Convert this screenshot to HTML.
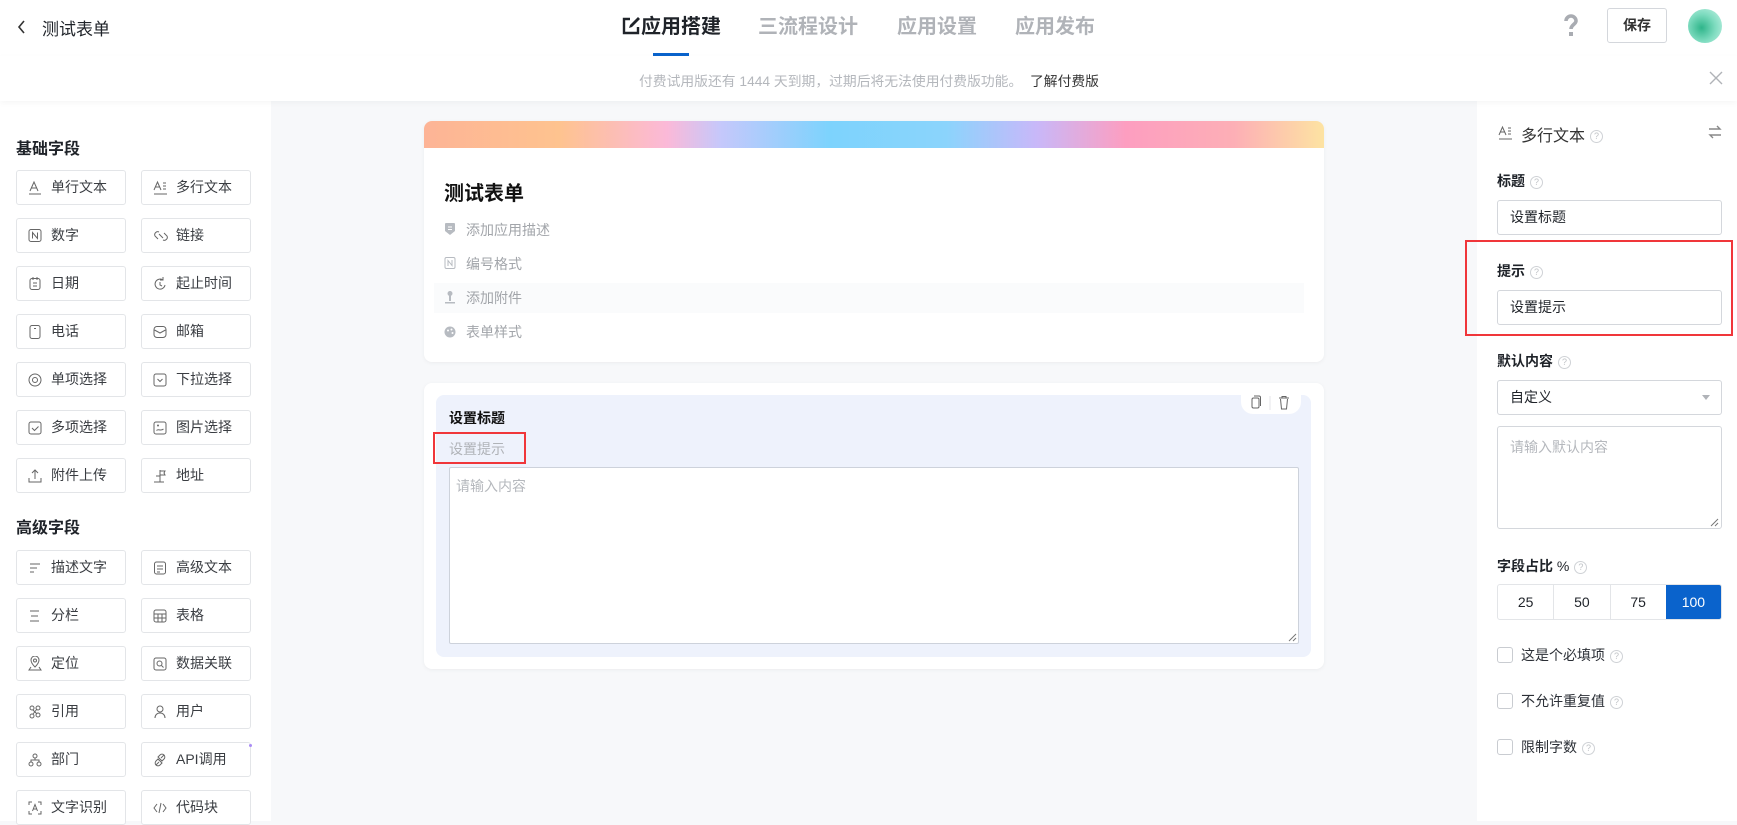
<!DOCTYPE html>
<html><head><meta charset="utf-8"><style>
*{box-sizing:border-box;margin:0;padding:0}
body{width:1737px;height:821px;overflow:hidden;background:#f7f8fa;font-family:"Liberation Sans","Noto Sans CJK SC",sans-serif;color:#1f2329;position:relative}
.a{position:absolute}
.hdr{left:0;top:0;width:1737px;height:56px;background:#fff;box-shadow:0 2px 6px rgba(0,0,0,.04);z-index:2}
.ban{left:0;top:56px;width:1737px;height:45px;background:#fff;box-shadow:0 2px 6px rgba(0,0,0,.04);z-index:2}
.tab{top:13px;font-size:20px;font-weight:bold;color:#b0b3b8;line-height:28px}
.left{left:0;top:101px;width:271px;height:720px;background:#fff}
.btn{position:absolute;width:110px;height:35px;border:1px solid #e3e5e8;border-radius:3px;font-size:14px;color:#3a3d42;line-height:33px;padding-left:34px;background:#fff}
.btn svg{position:absolute;left:11px;top:9px}
.sec{font-size:16px;font-weight:bold;color:#1f2329}
.right{left:1477px;top:101px;width:260px;height:720px;background:#fff}
.lbl{font-size:14px;font-weight:bold;color:#1f2329}
.q{display:inline-block;width:13px;height:13px;border:1px solid #cfd2d6;border-radius:50%;font-size:9px;line-height:11px;text-align:center;color:#bfc2c6;font-weight:normal;vertical-align:middle;margin-left:5px}
.inp{border:1px solid #d4d7dc;border-radius:3px;background:#fff;font-size:14px;padding-left:12px}
.ck{width:16px;height:16px;border:1px solid #c9ccd1;border-radius:3px}
.ckl{font-size:14px;color:#2b2f36}
.fi{font-size:14px;color:#a2a5aa}
</style></head><body>
<div class="a hdr">
 <svg class="a" style="left:17px;top:19px" width="10" height="16" viewBox="0 0 10 16"><path d="M7 2 L2 8 L7 14" stroke="#333" stroke-width="1.6" fill="none"/></svg>
 <div class="a" style="left:42px;top:15px;font-size:17px;color:#1f2329">测试表单</div>
 <svg class="a" style="left:621px;top:16px" width="20" height="20" viewBox="0 0 20 20"><path d="M9 3H3v14h14v-6" stroke="#1f2329" stroke-width="2.4" fill="none"/><path d="M8 12l1-3 8-8 2 2-8 8z" fill="#1f2329"/></svg>
 <div class="a tab" style="left:641px;color:#1f2329">应用搭建</div>
 <div class="a" style="left:653px;top:53px;width:36px;height:3px;background:#0a63cc"></div>
 <div class="a tab" style="left:758px">三流程设计</div>
 <div class="a tab" style="left:897px">应用设置</div>
 <div class="a tab" style="left:1015px">应用发布</div>
 <svg class="a" style="left:1563px;top:14px" width="16" height="24" viewBox="0 0 16 24"><path d="M3 7a5 5 0 0 1 10 0c0 3-5 4-5 8" stroke="#a9acb2" stroke-width="3.6" fill="none"/><rect x="6" y="18" width="4" height="4" fill="#a9acb2"/></svg>
 <div class="a" style="left:1607px;top:8px;width:60px;height:35px;border:1px solid #d4d7dc;border-radius:3px;font-size:14px;line-height:33px;text-align:center;font-weight:bold;color:#333">保存</div>
 <div class="a" style="left:1688px;top:9px;width:34px;height:34px;border-radius:50%;background:radial-gradient(circle at 40% 55%,#2fb58a,#7fdcc0 50%,#c8f3e7)"></div>
</div>
<div class="a ban">
 <div class="a" style="left:639px;top:14px;font-size:13.8px;color:#b4b7bc">付费试用版还有 1444 天到期，过期后将无法使用付费版功能。</div>
 <div class="a" style="left:1030px;top:14px;font-size:13.8px;color:#333">了解付费版</div>
 <svg class="a" style="left:1709px;top:15px" width="14" height="14" viewBox="0 0 14 14"><path d="M1 1L13 13M13 1L1 13" stroke="#b0b3b8" stroke-width="1.4"/></svg>
</div>
<div class="a left"></div>
<div class="a sec" style="left:16px;top:135px">基础字段</div>
<div class="a sec" style="left:16px;top:514px">高级字段</div>
<div class="btn" style="left:16px;top:170px"><svg width="14" height="16"><path d="M2 11L6 2 10 11M3.5 8h5M1 14h12" stroke="#666" fill="none"/></svg>单行文本</div>
<div class="btn" style="left:141px;top:170px"><svg width="16" height="16"><path d="M1 10L4.5 2 8 10M2 7h5M1 14h13M10 3h3M10 6h3M10 9h3" stroke="#666" fill="none"/></svg>多行文本</div>
<div class="btn" style="left:16px;top:218px"><svg width="14" height="16"><rect x="1" y="1.5" width="12" height="12" rx="2" stroke="#666" fill="none"/><path d="M4.5 10.5v-6l5 6v-6" stroke="#666" fill="none"/></svg>数字</div>
<div class="btn" style="left:141px;top:218px"><svg width="16" height="16"><path d="M6 4a3 3 0 0 0-4 4l3 3M10 12a3 3 0 0 0 4-4l-3-3M6 6l4 4" stroke="#666" fill="none"/></svg>链接</div>
<div class="btn" style="left:16px;top:266px"><svg width="14" height="16"><rect x="2" y="2.5" width="10" height="11" rx="2" stroke="#666" fill="none"/><path d="M5 1v3M9 1v3M5 7h4M5 10h4" stroke="#666"/></svg>日期</div>
<div class="btn" style="left:141px;top:266px"><svg width="14" height="16"><path d="M10 4A5 5 0 1 0 12 9M10 1v3h-3M7 6v3l2 1" stroke="#666" fill="none"/></svg>起止时间</div>
<div class="btn" style="left:16px;top:314px"><svg width="14" height="16"><rect x="2" y="1.5" width="10" height="13" rx="2" stroke="#666" fill="none"/><path d="M6 4.5h2" stroke="#666"/></svg>电话</div>
<div class="btn" style="left:141px;top:314px"><svg width="14" height="16"><rect x="1" y="2.5" width="12" height="11" rx="3" stroke="#666" fill="none"/><path d="M1.5 6l5.5 3 5.5-3" stroke="#666" fill="none"/></svg>邮箱</div>
<div class="btn" style="left:16px;top:362px"><svg width="14" height="16"><circle cx="7" cy="8" r="6" stroke="#666" fill="none"/><circle cx="7" cy="8" r="2.5" stroke="#666" fill="none"/></svg>单项选择</div>
<div class="btn" style="left:141px;top:362px"><svg width="14" height="16"><rect x="1" y="2" width="12" height="12" rx="2" stroke="#666" fill="none"/><path d="M4.5 7l2.5 2.5 2.5-2.5" stroke="#666" fill="none"/></svg>下拉选择</div>
<div class="btn" style="left:16px;top:410px"><svg width="14" height="16"><rect x="1" y="2" width="12" height="12" rx="2" stroke="#666" fill="none"/><path d="M4 8l2.5 2.5 4-4" stroke="#666" fill="none"/></svg>多项选择</div>
<div class="btn" style="left:141px;top:410px"><svg width="14" height="16"><rect x="1" y="2" width="12" height="12" rx="2" stroke="#666" fill="none"/><path d="M3.5 10.5c2-2 4 1 7-1.5" stroke="#666" fill="none"/><circle cx="5" cy="5.5" r="1" fill="#666"/></svg>图片选择</div>
<div class="btn" style="left:16px;top:458px"><svg width="14" height="16"><path d="M7 11V2M4 5l3-3 3 3M1 10v4h12v-4" stroke="#666" fill="none"/></svg>附件上传</div>
<div class="btn" style="left:141px;top:458px"><svg width="14" height="16"><path d="M7 2v12M7 3h5l-1 2 1 2H7M3 8h4M1 14h10" stroke="#666" fill="none"/></svg>地址</div>
<div class="btn" style="left:16px;top:550px"><svg width="14" height="16"><path d="M2 4h10M2 8h7M2 12h4" stroke="#666"/></svg>描述文字</div>
<div class="btn" style="left:141px;top:550px"><svg width="14" height="16"><rect x="1.5" y="2" width="11" height="12" rx="2" stroke="#666" fill="none"/><path d="M4 6h6M4 9h6M4 12h3" stroke="#666"/></svg>高级文本</div>
<div class="btn" style="left:16px;top:598px"><svg width="14" height="16"><path d="M2 3h9M3 8h7M2 13h9" stroke="#666"/></svg>分栏</div>
<div class="btn" style="left:141px;top:598px"><svg width="14" height="16"><rect x="1" y="2" width="12" height="12" rx="2" stroke="#666" fill="none"/><path d="M1 6h12M1 10h12M5 6v8M9 6v8" stroke="#666"/></svg>表格</div>
<div class="btn" style="left:16px;top:646px"><svg width="14" height="16"><path d="M7 11c-3-3-4-5-4-7a4 4 0 0 1 8 0c0 2-1 4-4 7z" stroke="#666" fill="none"/><circle cx="7" cy="4.5" r="1.5" stroke="#666" fill="none"/><path d="M3 11l-2 3h12l-2-3" stroke="#666" fill="none"/></svg>定位</div>
<div class="btn" style="left:141px;top:646px"><svg width="14" height="16"><rect x="1" y="2" width="12" height="12" rx="2" stroke="#666" fill="none"/><circle cx="6.5" cy="7.5" r="2.5" stroke="#666" fill="none"/><path d="M8.5 9.5l2 2" stroke="#666"/></svg>数据关联</div>
<div class="btn" style="left:16px;top:694px"><svg width="14" height="16"><circle cx="4" cy="4" r="2" stroke="#666" fill="none"/><circle cx="10" cy="4" r="2" stroke="#666" fill="none"/><circle cx="4" cy="12" r="2" stroke="#666" fill="none"/><circle cx="10" cy="11" r="2" stroke="#666" fill="none"/><path d="M5 6l4 4M9 5l-4 5" stroke="#666"/></svg>引用</div>
<div class="btn" style="left:141px;top:694px"><svg width="14" height="16"><circle cx="7" cy="5" r="3" stroke="#666" fill="none"/><path d="M2 14c0-3 2-5 5-5s5 2 5 5" stroke="#666" fill="none"/></svg>用户</div>
<div class="btn" style="left:16px;top:742px"><svg width="14" height="16"><circle cx="7" cy="4" r="2" stroke="#666" fill="none"/><circle cx="3" cy="12" r="2" stroke="#666" fill="none"/><circle cx="11" cy="12" r="2" stroke="#666" fill="none"/><path d="M7 6v2M3 10V8h8v2" stroke="#666" fill="none"/></svg>部门</div>
<div class="btn" style="left:141px;top:742px"><svg width="14" height="16"><path d="M3 13l3-3M11 3l-3 3M5 7l4 4-2 2a2.8 2.8 0 0 1-4-4zM9 9L5 5l2-2a2.8 2.8 0 0 1 4 4z" stroke="#666" fill="none"/></svg>API调用</div>
<div class="a" style="left:249px;top:744px;width:3px;height:3px;border-radius:50%;background:#a98cf5"></div>
<div class="btn" style="left:16px;top:790px"><svg width="14" height="16"><path d="M1 5V2h3M10 2h3v3M13 11v3h-3M4 14H1v-3M4.5 11L7 4.5 9.5 11M5.5 9h3" stroke="#666" fill="none"/></svg>文字识别</div>
<div class="btn" style="left:141px;top:790px"><svg width="14" height="16"><path d="M4 4L1 8l3 4M10 4l3 4-3 4M8 3L6 13" stroke="#666" fill="none"/></svg>代码块</div>

<div class="a" style="left:424px;top:121px;width:900px;height:241px;background:#fff;border-radius:8px;overflow:hidden;box-shadow:0 1px 4px rgba(0,0,0,.05)">
 <div style="height:27px;background:linear-gradient(90deg,#fdb496 0%,#fec38f 15%,#fbb9d8 27%,#c5c8fb 33%,#7dd3fd 45%,#8bd4fc 58%,#c8b8f9 68%,#fd9ec0 78%,#fdafb6 90%,#fde3a2 100%)"></div>
 <div class="a" style="left:20px;top:56px;font-size:20px;font-weight:bold;color:#111">测试表单</div>
 <div class="a" style="left:10px;top:162px;width:870px;height:30px;background:#fafbfc"></div>
 <svg class="a" style="left:20px;top:101px" width="12" height="14"><path d="M2 1h8a1 1 0 0 1 1 1v7l-5 4-5-4V2a1 1 0 0 1 1-1z" fill="#b7bbc1"/><path d="M4 5h4M4 7.5h4" stroke="#fff"/></svg>
 <div class="a fi" style="left:42px;top:99px">添加应用描述</div>
 <svg class="a" style="left:20px;top:135px" width="12" height="14"><rect x="1" y="1.5" width="10" height="11" rx="1.5" stroke="#b7bbc1" fill="none"/><path d="M4 10V4.5l4 5V4" stroke="#b7bbc1" fill="none"/></svg>
 <div class="a fi" style="left:42px;top:133px">编号格式</div>
 <svg class="a" style="left:20px;top:169px" width="12" height="14"><circle cx="6" cy="3.5" r="2.5" fill="#b7bbc1"/><path d="M5 5h2v6H5zM1 12h10v1.5H1z" fill="#b7bbc1"/></svg>
 <div class="a fi" style="left:42px;top:167px">添加附件</div>
 <svg class="a" style="left:20px;top:204px" width="12" height="14"><circle cx="6" cy="7" r="5.5" fill="#b7bbc1"/><circle cx="4" cy="5.5" r="1" fill="#fff"/><circle cx="7.5" cy="4.5" r="1" fill="#fff"/><circle cx="8.5" cy="8" r="1" fill="#fff"/></svg>
 <div class="a fi" style="left:42px;top:201px">表单样式</div>
</div>

<div class="a" style="left:424px;top:383px;width:900px;height:286px;background:#fff;border-radius:8px;box-shadow:0 1px 4px rgba(0,0,0,.05)"></div>
<div class="a" style="left:436px;top:395px;width:875px;height:262px;background:#eef2fc;border-radius:8px"></div>
<div class="a" style="left:1241px;top:390px;width:60px;height:24px;background:#fff;border-radius:0 0 12px 12px"></div>
<svg class="a" style="left:1249px;top:395px" width="44" height="16"><rect x="3" y="3" width="7" height="10" rx="1.5" stroke="#666" fill="none"/><path d="M5 1h5a1.5 1.5 0 0 1 1.5 1.5V11" stroke="#666" fill="none"/><path d="M21 1v14" stroke="#e5e6e8"/><path d="M30 3h10M33 3V1.5h4V3M31.5 4l1 10h5l1-10" stroke="#666" fill="none"/></svg>
<div class="a" style="left:449px;top:408px;font-size:14px;font-weight:bold;color:#111">设置标题</div>
<div class="a" style="left:449px;top:439px;font-size:14px;color:#b0b3b8">设置提示</div>
<div class="a" style="left:433px;top:432px;width:93px;height:32px;border:2px solid #f0363a"></div>
<div class="a" style="left:449px;top:467px;width:850px;height:177px;background:#fff;border:1px solid #cdd2db;border-radius:2px"></div>
<div class="a" style="left:456px;top:476px;font-size:14px;color:#b5b8bd">请输入内容</div>
<svg class="a" style="left:1288px;top:633px" width="9" height="9"><path d="M1 8L8 1M5 8L8 5" stroke="#777"/></svg>

<div class="a right"></div>
<svg class="a" style="left:1498px;top:125px" width="16" height="16"><path d="M1 10L4.5 2 8 10M2 7h5M1 14h13M10 3h3M10 6h3M10 9h3" stroke="#666" fill="none"/></svg>
<div class="a" style="left:1521px;top:122px;font-size:16px;color:#333">多行文本<span class="q">?</span></div>
<svg class="a" style="left:1708px;top:125px" width="14" height="14"><path d="M1 4h11l-3-3M13 10H2l3 3" stroke="#888" fill="none" stroke-width="1.4"/></svg>
<div class="a lbl" style="left:1497px;top:171px">标题<span class="q">?</span></div>
<div class="a inp" style="left:1497px;top:200px;width:225px;height:35px;line-height:33px;color:#1f2329">设置标题</div>
<div class="a" style="left:1465px;top:240px;width:268px;height:96px;border:2px solid #f0363a"></div>
<div class="a lbl" style="left:1497px;top:261px">提示<span class="q">?</span></div>
<div class="a inp" style="left:1497px;top:290px;width:225px;height:35px;line-height:33px;color:#1f2329">设置提示</div>
<div class="a lbl" style="left:1497px;top:351px">默认内容<span class="q">?</span></div>
<div class="a inp" style="left:1497px;top:380px;width:225px;height:35px;line-height:33px;color:#1f2329">自定义</div>
<svg class="a" style="left:1702px;top:395px" width="8" height="6"><path d="M0 0h8L4 5z" fill="#b0b3b8"/></svg>
<div class="a inp" style="left:1497px;top:426px;width:225px;height:103px;padding-top:10px;color:#b5b8bd">请输入默认内容</div>
<svg class="a" style="left:1710px;top:518px" width="9" height="9"><path d="M1 8L8 1M5 8L8 5" stroke="#777"/></svg>
<div class="a lbl" style="left:1497px;top:556px">字段占比 <span style="font-weight:normal">%</span><span class="q">?</span></div>
<div class="a" style="left:1497px;top:584px;width:225px;height:36px;border:1px solid #e3e5e8;border-radius:3px;display:flex;font-size:14px;line-height:34px;text-align:center;overflow:hidden">
 <div style="flex:1;border-right:1px solid #e3e5e8">25</div><div style="flex:1;border-right:1px solid #e3e5e8">50</div><div style="flex:1">75</div><div style="flex:1;background:#0a63cc;color:#fff">100</div>
</div>
<div class="a ck" style="left:1497px;top:647px"></div><div class="a ckl" style="left:1521px;top:645px">这是个必填项<span class="q">?</span></div>
<div class="a ck" style="left:1497px;top:693px"></div><div class="a ckl" style="left:1521px;top:691px">不允许重复值<span class="q">?</span></div>
<div class="a ck" style="left:1497px;top:739px"></div><div class="a ckl" style="left:1521px;top:737px">限制字数<span class="q">?</span></div>
</body></html>
